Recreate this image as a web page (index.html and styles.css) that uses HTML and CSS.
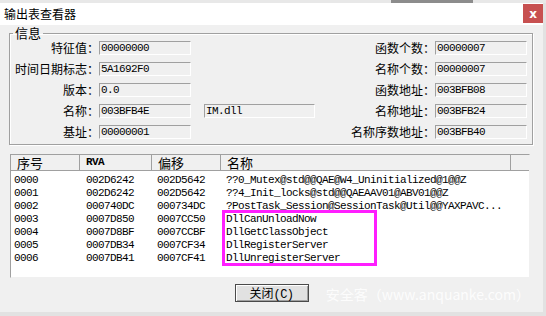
FILE: index.html
```html
<!DOCTYPE html>
<html lang="zh-CN">
<head>
    <meta charset="UTF-8">
    <meta name="viewport" content="width=device-width, initial-scale=1.0">
    <title>输出表查看器</title>
    <link rel="stylesheet" href="styles.css">
</head>
<body>
    <div class="desk-top"><span class="desk-bar"></span></div>
    <div class="window">
        <div class="titlebar">
            <span class="title">输出表查看器</span>
            <span class="close">x</span>
        </div>
        <div class="client">
            <fieldset class="info">
                <legend>信息</legend>
                <div class="fields">
                    <span class="label">特征值：</span><span class="field">00000000</span><span></span><span></span>
                    <span class="label">函数个数：</span><span class="field">00000007</span>

                    <span class="label">时间日期标志：</span><span class="field">5A1692F0</span><span></span><span></span>
                    <span class="label">名称个数：</span><span class="field">00000007</span>

                    <span class="label">版本：</span><span class="field">0.0</span><span></span><span></span>
                    <span class="label">函数地址：</span><span class="field">003BFB08</span>

                    <span class="label">名称：</span><span class="field">003BFB4E</span><span></span><span class="field">IM.dll</span>
                    <span class="label">名称地址：</span><span class="field">003BFB24</span>

                    <span class="label">基址：</span><span class="field">00000001</span><span></span><span></span>
                    <span class="label">名称序数地址：</span><span class="field">003BFB40</span>
                </div>
            </fieldset>

            <div class="list">
                <div class="list-head">
                    <span class="head-cell">序号</span>
                    <span class="head-cell mono">RVA</span>
                    <span class="head-cell">偏移</span>
                    <span class="head-cell">名称</span>
                    <span class="head-cell last"></span>
                </div>
                <div class="rows">
                    <div class="row"><span>0000</span><span>002D6242</span><span>002D5642</span><span>??0_Mutex@std@@QAE@W4_Uninitialized@1@@Z</span></div>
                    <div class="row"><span>0001</span><span>002D6242</span><span>002D5642</span><span>??4_Init_locks@std@@QAEAAV01@ABV01@@Z</span></div>
                    <div class="row"><span>0002</span><span>000740DC</span><span>000734DC</span><span>?PostTask_Session@SessionTask@Util@@YAXPAVC...</span></div>
                    <div class="row"><span>0003</span><span>0007D850</span><span>0007CC50</span><span>DllCanUnloadNow</span></div>
                    <div class="row"><span>0004</span><span>0007D8BF</span><span>0007CCBF</span><span>DllGetClassObject</span></div>
                    <div class="row"><span>0005</span><span>0007DB34</span><span>0007CF34</span><span>DllRegisterServer</span></div>
                    <div class="row"><span>0006</span><span>0007DB41</span><span>0007CF41</span><span>DllUnregisterServer</span></div>
                </div>
                <div class="mark"></div>
            </div>

            <div class="actions">
                <button class="btn">关闭<span class="mono">(C)</span></button>
                <span class="watermark">安全客（www.anquanke.com）</span>
            </div>
        </div>
    </div>
</body>
</html>
```

FILE: styles.css
```css
body {
    margin: 0;
    width: 546px;
    height: 316px;
    overflow: hidden;
    background: #e2e2e2;
    font-family: "Noto Sans CJK SC", sans-serif;
    font-size: 12px;
    color: #000;
}
.mono {
    font-family: "Liberation Mono", monospace;
    letter-spacing: -0.6px;
}
.desk-top {
    height: 3px;
    display: flex;
    background: #e8e8e8;
}
.desk-bar {
    margin-left: 391px;
    width: 82px;
    background: #8c8c8c;
}
.window {
    width: 543px;
    height: 309px;
    background: #f0f0f0;
    display: flex;
    flex-direction: column;
}
.titlebar {
    height: 22px;
    background: #fff;
    display: flex;
    justify-content: space-between;
}
.title {
    padding-left: 4px;
    line-height: 21px;
    font-size: 12px;
}
.close {
    width: 20px;
    height: 19px;
    margin-top: 1px;
    background: #c75050;
    color: #fff;
    font: bold 12px "DejaVu Sans", sans-serif;
    display: flex;
    align-items: center;
    justify-content: center;
}
.client {
    flex: 1;
    padding-top: 1px;
}
.info {
    margin: 0 10px 0 9px;
    padding: 1px 0 5px 0;
    border: 1px solid #a0a0a0;
    box-shadow: inset 1px 1px #fff, 1px 1px #fff;
    min-width: 0;
}
.info legend {
    margin-left: 3px;
    padding: 0 2px;
    font-size: 13px;
    line-height: 14px;
}
.fields {
    display: grid;
    grid-template-columns: 89px 92px 13px 111px 120px 92px;
    grid-auto-rows: 14px;
    row-gap: 7px;
}
.label {
    text-align: right;
    line-height: 14px;
    white-space: nowrap;
}
.field {
    border: 1px solid;
    border-color: #a0a0a0 #fff #fff #a0a0a0;
    background: #f0f0f0;
    padding-left: 1px;
    font-family: "Liberation Mono", monospace;
    font-size: 11px;
    letter-spacing: -0.6px;
    line-height: 12px;
    white-space: nowrap;
    overflow: hidden;
}
.list {
    position: relative;
    margin: 9px 13px 0 10px;
    height: 122px;
    border: 1px solid;
    border-color: #a0a0a0 #f0f0f0 #f0f0f0 #a0a0a0;
    background: #fff;
}
.list-head,
.row {
    display: grid;
    grid-template-columns: 69px 72px 69px 290px 1fr;
}
.list-head {
    height: 15px;
    background: #f0f0f0;
    border-bottom: 1px solid #a0a0a0;
}
.head-cell {
    border-right: 1px solid #a0a0a0;
    padding-left: 6px;
    font-size: 13px;
    line-height: 15px;
}
.head-cell.mono {
    font-size: 11px;
    font-weight: bold;
}
.head-cell.last {
    border-right: none;
}
.rows {
    padding-top: 3px;
}
.row {
    height: 13px;
    font-family: "Liberation Mono", monospace;
    font-size: 11px;
    letter-spacing: -0.6px;
    line-height: 13px;
}
.row span {
    padding-left: 5px;
    white-space: nowrap;
    overflow: hidden;
}
.row span:first-child {
    padding-left: 3px;
}
.row span:nth-child(2) {
    padding-left: 6px;
}
.mark {
    position: absolute;
    left: 211px;
    top: 55px;
    width: 149px;
    height: 50px;
    border: 3px solid #ff1eff;
}
.actions {
    position: relative;
    display: flex;
    justify-content: center;
    margin-top: 6px;
}
.btn {
    width: 74px;
    height: 18px;
    padding: 0;
    background: #e1e1e1;
    border: 1px solid #4a4a4a;
    box-shadow: inset 1px 1px #fff, inset -1px -1px #a0a0a0;
    font-family: "Noto Sans CJK SC", sans-serif;
    font-size: 12px;
    line-height: 16px;
    color: #000;
}
.watermark {
    position: absolute;
    right: 13px;
    top: 0;
    color: rgba(255, 255, 255, 0.85);
    font-size: 14px;
    line-height: 20px;
    white-space: nowrap;
}
```
